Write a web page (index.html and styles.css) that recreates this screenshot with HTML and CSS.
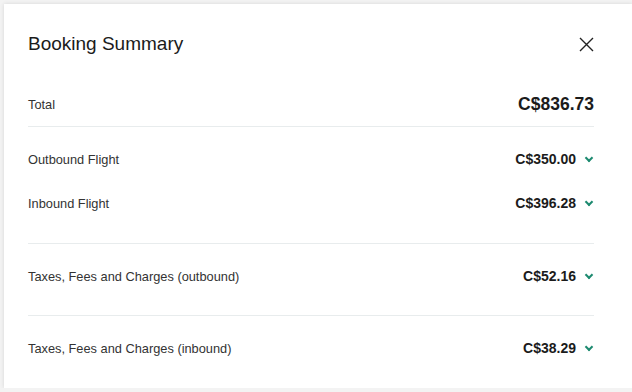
FILE: index.html
```html
<!DOCTYPE html>
<html lang="en">
<head>
    <meta charset="UTF-8">
    <meta name="viewport" content="width=device-width, initial-scale=1.0">
    <title>Booking Summary</title>
    <link rel="stylesheet" href="styles.css">
</head>
<body>

    <div class="card">
        <div class="card-header">
            <h2>Booking Summary</h2>
            <button class="close" aria-label="Close">
                <svg width="15" height="15" viewBox="0 0 15 15"><path d="M1 1L14 14M14 1L1 14" stroke="#222" stroke-width="1.4" fill="none"/></svg>
            </button>
        </div>

        <div class="row total">
            <span class="label">Total</span>
            <span class="price">C$836.73</span>
        </div>

        <div class="section flights">
            <div class="row">
                <span class="label">Outbound Flight</span>
                <span class="price">C$350.00 <i class="chev"></i></span>
            </div>
            <div class="row">
                <span class="label">Inbound Flight</span>
                <span class="price">C$396.28 <i class="chev"></i></span>
            </div>
        </div>

        <div class="section taxes">
            <div class="row">
                <span class="label">Taxes, Fees and Charges (outbound)</span>
                <span class="price">C$52.16 <i class="chev"></i></span>
            </div>
        </div>

        <div class="section last">
            <div class="row">
                <span class="label">Taxes, Fees and Charges (inbound)</span>
                <span class="price">C$38.29 <i class="chev"></i></span>
            </div>
        </div>
    </div>

</body>
</html>
```

FILE: styles.css
```css
/* --- Booking summary panel --- */
body {
    margin: 0;
    padding: 4px 0 0 4px;
    background: #f3f3f3;
    font-family: 'Liberation Sans', Arial, sans-serif;
    color: #333;
    overflow: hidden;
}

.card {
    width: 628px;
    height: 384px;
    box-sizing: border-box;
    padding: 0 38px 0 24px;
    background: #fff;
    box-shadow: 0 0 4px rgba(0,0,0,0.12);
}

.card-header {
    height: 80px;
    display: flex;
    align-items: center;
    justify-content: space-between;
}
.card-header h2 {
    margin: 0;
    font-size: 19px;
    font-weight: normal;
    color: #1b1b1b;
}
.close {
    border: none;
    background: none;
    padding: 0;
    display: flex;
}

/* Rows */
.row {
    height: 44px;
    display: flex;
    align-items: center;
    justify-content: space-between;
}
.label { font-size: 12.8px; }
.price {
    font-size: 14px;
    font-weight: bold;
    color: #1b1b1b;
    display: flex;
    align-items: center;
}

.row.total {
    height: 40px;
    padding-bottom: 2px;
    border-bottom: 1px solid #e8eced;
}
.row.total .price { font-size: 17.5px; }

.section { border-bottom: 1px solid #e8eced; }
.section.flights { padding: 10px 0 18px; }
.section.taxes { padding: 10px 0 17px; }
.section.last { padding: 10px 0 0; border-bottom: none; }

/* Chevron */
.chev {
    width: 4px;
    height: 4px;
    margin: -3px 2px 0 10px;
    border-right: 2px solid #1d8a70;
    border-bottom: 2px solid #1d8a70;
    transform: rotate(45deg);
}
```
